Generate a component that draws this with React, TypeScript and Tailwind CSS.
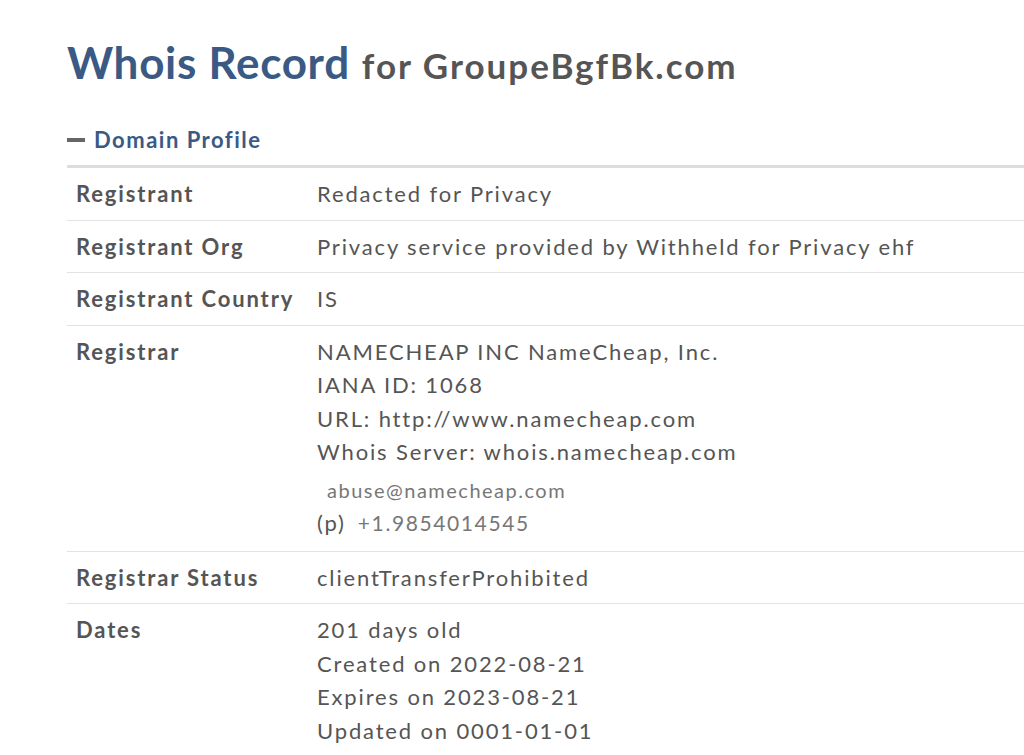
import React from 'react';

type Row = { label: string; lines: React.ReactNode[] };

const rows: Row[] = [
  { label: 'Registrant', lines: ['Redacted for Privacy'] },
  { label: 'Registrant Org', lines: ['Privacy service provided by Withheld for Privacy ehf'] },
  { label: 'Registrant Country', lines: ['IS'] },
  {
    label: 'Registrar',
    lines: [
      'NAMECHEAP INC NameCheap, Inc.',
      'IANA ID: 1068',
      'URL: http://www.namecheap.com',
      'Whois Server: whois.namecheap.com',
    ],
  },
  { label: 'Registrar Status', lines: ['clientTransferProhibited'] },
  {
    label: 'Dates',
    lines: ['201 days old', 'Created on 2022-08-21', 'Expires on 2023-08-21', 'Updated on 0001-01-01'],
  },
];

const App: React.FC = () => {
  return (
    <div className="min-h-[755px] w-[1024px] overflow-hidden bg-white font-['Lato',sans-serif] text-[#555]">
      <div className="pl-[67px] pt-[35px]">
        {/* Title */}
        <h1 className="flex items-baseline gap-[12px] whitespace-nowrap leading-[54px]">
          <span className="text-[44px] font-bold tracking-[0.7px] text-[#3a5a85]">Whois Record</span>
          <span className="text-[35px] font-bold tracking-[2px] text-[#555]">for GroupeBgfBk.com</span>
        </h1>

        {/* Section header */}
        <div className="mt-[31px] flex items-center gap-[9px] pb-[9px]">
          <div className="h-[4px] w-[18px] bg-[#666]" />
          <span className="text-[22px] font-bold tracking-[1.5px] text-[#3a5a85]">Domain Profile</span>
        </div>

        {/* Table */}
        <div className="border-t-[3px] border-[#ddd]">
          {rows.map((row) => (
            <div key={row.label} className="flex border-b border-[#e2e2e2] py-[9px] text-[22px] leading-[33.5px] tracking-[1.85px] whitespace-nowrap">
              <div className="w-[250px] shrink-0 pl-[9px] font-bold">{row.label}</div>
              <div className="flex flex-col">
                {row.lines.map((l, i) => (
                  <div key={i}>{l}</div>
                ))}
                {row.label === 'Registrar' && (
                  <>
                    <div className="mt-[5px] pl-[10px] text-[20px] leading-[32px] tracking-[1.5px] text-[#777]">abuse@namecheap.com</div>
                    <div className="mb-[3px] flex items-baseline gap-[12px] leading-[33px]">
                      <span>(p)</span>
                      <span className="text-[21px] tracking-[1.6px] text-[#777]">+1.9854014545</span>
                    </div>
                  </>
                )}
              </div>
            </div>
          ))}
        </div>
      </div>
    </div>
  );
};

export default App;
